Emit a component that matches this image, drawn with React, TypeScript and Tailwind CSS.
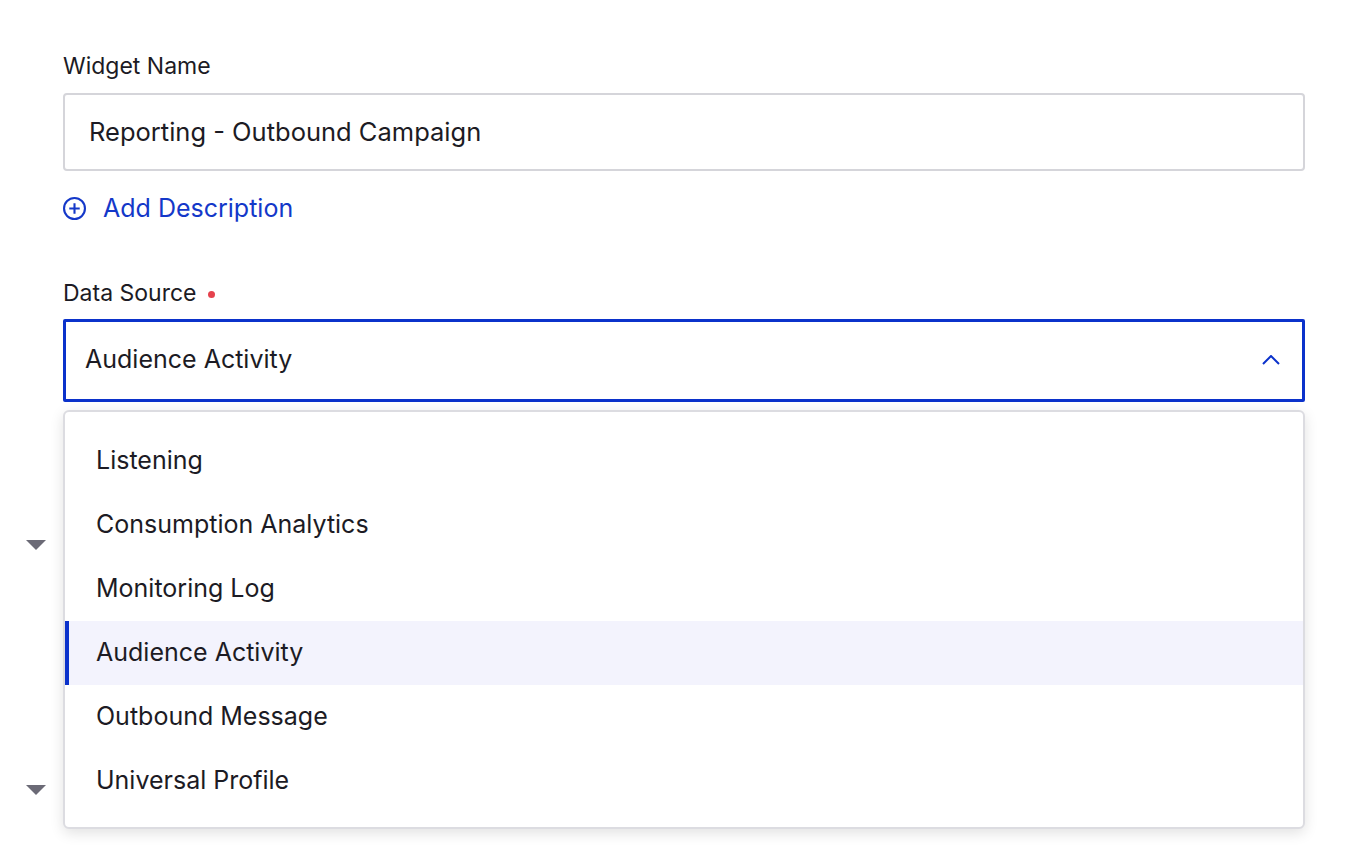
const options = [
  'Listening',
  'Consumption Analytics',
  'Monitoring Log',
  'Audience Activity',
  'Outbound Message',
  'Universal Profile',
];

function Caret() {
  return (
    <svg width="20" height="10" viewBox="0 0 20 10">
      <path d="M0 0 L20 0 L10 10 Z" fill="#6b6a76" />
    </svg>
  );
}

export default function App() {
  const selected = 'Audience Activity';

  return (
    <div className="relative w-[1372px] h-[846px] bg-white overflow-hidden text-[#1c1b24]" style={{ fontFamily: 'Inter, "Noto Sans", sans-serif' }}>
      <div className="pl-[63px] pr-[67px] pt-[52px]">
        <label className="block text-[23px] leading-[28px] mb-[13px]">Widget Name</label>
        <div className="h-[78px] border-2 border-[#d5d5da] rounded-[4px] flex items-center px-[24px] text-[25.5px]">
          Reporting - Outbound Campaign
        </div>
        <button className="mt-[19px] flex items-center gap-[17px] text-[#1438c9] text-[25px]">
          <svg width="23" height="23" viewBox="1 1 22 22" fill="none" stroke="#1438c9" strokeWidth="2">
            <circle cx="12" cy="12" r="10" />
            <path d="M12 7v10M7 12h10" />
          </svg>
          Add Description
        </button>

        <div className="mt-[51px] flex items-center gap-[11px]">
          <span className="text-[23px] leading-[28px]">Data Source</span>
          <span className="w-[7px] h-[7px] rounded-full bg-[#e5424d] mt-[4px]" />
        </div>
        <div className="mt-[12px] h-[83px] border-[3px] border-[#0b32cb] rounded-[2px] flex items-center justify-between pl-[19px] pr-[22px] text-[25px]">
          <span>{selected}</span>
          <svg width="18" height="10" viewBox="0 0 18 10" fill="none" stroke="#0b32cb" strokeWidth="2">
            <path d="M1 9 L9 1 L17 9" />
          </svg>
        </div>

        <div className="relative mt-[8px] border-2 border-[#dcdce1] rounded-[6px] shadow-[0_4px_14px_rgba(0,0,0,0.12)] bg-white pt-[17px] pb-[14px]">
          {options.map(o => (
            <div
              key={o}
              className={
                o === selected
                  ? 'h-[64px] flex items-center pl-[27px] text-[25px] bg-[#f3f3fd] border-l-4 border-[#0b32cb]'
                  : 'h-[64px] flex items-center pl-[31px] text-[25px]'
              }
            >
              {o}
            </div>
          ))}
        </div>
      </div>

      <div className="absolute left-[26px] top-[540px]"><Caret /></div>
      <div className="absolute left-[26px] top-[785px]"><Caret /></div>
    </div>
  );
}
